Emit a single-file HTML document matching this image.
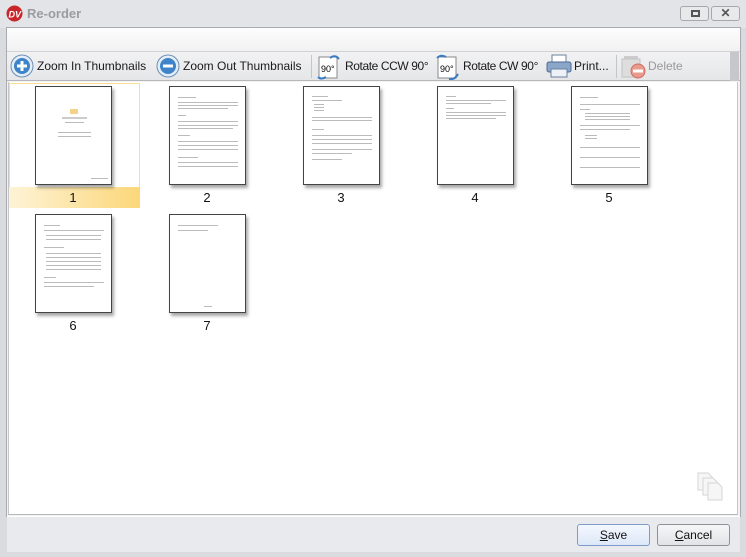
<!DOCTYPE html>
<html><head><meta charset="utf-8"><style>
*{margin:0;padding:0;box-sizing:border-box}
body{width:746px;height:557px;background:#d9dbdf;font-family:"Liberation Sans",sans-serif;position:relative;overflow:hidden}
.a{position:absolute}
.tb{font-size:12px;color:#1a1a1a;top:59px;white-space:nowrap}
.pg{position:absolute;width:77px;height:99px;background:#fff;border:1px solid #444;box-shadow:2px 3px 3px rgba(0,0,0,.35)}
.pg i{position:absolute;height:1px;background:#bbb;display:block}
.lbl{position:absolute;font-size:13px;color:#111;width:40px;text-align:center}
.btn{position:absolute;top:524px;width:73px;height:22px;border:1px solid #8e9298;border-radius:3px;font-size:12px;text-align:center;line-height:20px;color:#111}
</style></head><body>
<div class="a" style="left:0;top:0;width:746px;height:28px;background:#e3e4e7"></div>
<svg class="a" style="left:6px;top:5px" width="17" height="17"><circle cx="8.5" cy="8.5" r="8" fill="#c8262b"/><text x="2.5" y="12.5" font-size="9" font-weight="bold" fill="#fff" font-family="Liberation Sans" font-style="italic">DV</text></svg>
<div class="a" style="left:27px;top:6px;font-size:13px;font-weight:bold;color:#9a9ca0">Re-order</div>
<div class="a" style="left:680px;top:6px;width:29px;height:15px;border:1px solid #a6a8ad;border-radius:3px;background:#e8e9eb"><div class="a" style="left:10px;top:3px;width:9px;height:7px;border:2px solid #555"></div></div>
<div class="a" style="left:711px;top:6px;width:29px;height:15px;border:1px solid #a6a8ad;border-radius:3px;background:#e8e9eb;font-size:12px;font-weight:bold;color:#555;text-align:center;line-height:13px">✕</div>
<div class="a" style="left:6px;top:27px;width:735px;height:490px;border:1px solid #a9abb0;background:#f3f3f4"></div>
<div class="a" style="left:7px;top:28px;width:733px;height:24px;background:linear-gradient(#fdfdfd,#f1f1f2)"></div>
<div class="a" style="left:7px;top:51px;width:733px;height:30px;background:linear-gradient(#f2f2f3,#e5e6e8);border-top:1px solid #d0d1d4;border-bottom:1px solid #b5b7bb"></div>
<svg class="a" style="left:10px;top:54px" width="24" height="24"><circle cx="12" cy="12" r="11" fill="#e4eef8" stroke="#6c8fb5"/><circle cx="12" cy="12" r="8" fill="#3f83c8"/><rect x="7" y="10.5" width="10" height="3" fill="#fff"/><rect x="10.5" y="7" width="3" height="10" fill="#fff"/></svg>
<div class="a tb" style="left:37px">Zoom In Thumbnails</div>
<svg class="a" style="left:156px;top:54px" width="24" height="24"><circle cx="12" cy="12" r="11" fill="#e4eef8" stroke="#6c8fb5"/><circle cx="12" cy="12" r="8" fill="#3f83c8"/><rect x="7" y="10.5" width="10" height="3" fill="#fff"/></svg>
<div class="a tb" style="left:183px">Zoom Out Thumbnails</div>
<div class="a" style="left:311px;top:55px;width:1px;height:23px;background:#c4c5c8"></div>
<svg class="a" style="left:316px;top:53px" width="26" height="27"><rect x="3" y="4" width="18" height="21" fill="#fff" stroke="#888"/><text x="5" y="19" font-size="9" font-family="Liberation Sans">90°</text><path d="M14 5 Q19 1 23 6" stroke="#3a7cc4" stroke-width="2" fill="none"/><path d="M2 24 Q5 27 10 24" stroke="#3a7cc4" stroke-width="2" fill="none"/></svg>
<div class="a tb" style="left:345px;letter-spacing:-0.4px">Rotate CCW 90°</div>
<svg class="a" style="left:435px;top:53px" width="26" height="27"><rect x="3" y="4" width="18" height="21" fill="#fff" stroke="#888"/><text x="5" y="19" font-size="9" font-family="Liberation Sans">90°</text><path d="M2 5 Q6 1 11 4" stroke="#3a7cc4" stroke-width="2" fill="none"/><path d="M14 26 Q20 27 23 21" stroke="#3a7cc4" stroke-width="2" fill="none"/></svg>
<div class="a tb" style="left:463px;letter-spacing:-0.4px">Rotate CW 90°</div>
<svg class="a" style="left:546px;top:54px" width="26" height="24"><rect x="6" y="1" width="14" height="8" fill="#fff" stroke="#6a7fa0"/><rect x="1" y="8" width="24" height="10" rx="2" fill="#8aa6c8" stroke="#4d6a94"/><rect x="5" y="15" width="16" height="8" fill="#eef2f7" stroke="#6a7fa0"/></svg>
<div class="a tb" style="left:574px">Print...</div>
<div class="a" style="left:616px;top:55px;width:1px;height:23px;background:#c4c5c8"></div>
<svg class="a" style="left:620px;top:54px" width="28" height="26"><rect x="4" y="2" width="14" height="3" fill="#ccc"/><rect x="2" y="5" width="18" height="18" fill="#ddd" stroke="#c2c2c2"/><circle cx="18" cy="17" r="7" fill="#e89a8e" stroke="#d06c5e"/><rect x="13" y="15.5" width="10" height="3" fill="#fff"/></svg>
<div class="a tb" style="left:648px;color:#999">Delete</div>
<div class="a" style="left:730px;top:52px;width:9px;height:29px;background:#c6c7ca"></div>
<div class="a" style="left:8px;top:82px;width:730px;height:433px;background:#fff;border-left:1px solid #c4c6ca;border-right:1px solid #c4c6ca;border-bottom:1px solid #b5b7bb"></div>
<div class="a" style="left:9px;top:83px;width:131px;height:125px;border:1px solid #f8dd96;background:#fff"></div>
<div class="a" style="left:9px;top:187px;width:131px;height:21px;background:linear-gradient(90deg,#fdf3d6,#fcd77a)"></div>

<div class="pg" style="left:35px;top:86px"><i style="left:34px;top:22px;width:8px;height:5px;background:#f3d38a"></i><i style="left:26px;top:30px;width:25px;height:2px;background:#ccc"></i><i style="left:29px;top:35px;width:19px"></i><i style="left:22px;top:45px;width:33px"></i><i style="left:22px;top:49px;width:33px"></i><i style="left:55px;top:91px;width:17px"></i></div>
<div class="pg" style="left:169px;top:86px"><i style="left:8px;top:10px;width:18px"></i><i style="left:8px;top:15px;width:60px"></i><i style="left:8px;top:18px;width:60px"></i><i style="left:8px;top:21px;width:50px"></i><i style="left:8px;top:28px;width:8px"></i><i style="left:8px;top:34px;width:60px"></i><i style="left:8px;top:38px;width:60px"></i><i style="left:8px;top:41px;width:55px"></i><i style="left:8px;top:48px;width:12px"></i><i style="left:8px;top:54px;width:60px"></i><i style="left:8px;top:58px;width:60px"></i><i style="left:8px;top:62px;width:60px"></i><i style="left:8px;top:70px;width:20px"></i><i style="left:8px;top:75px;width:60px"></i><i style="left:8px;top:79px;width:60px"></i></div>
<div class="pg" style="left:303px;top:86px"><i style="left:8px;top:9px;width:16px"></i><i style="left:8px;top:13px;width:30px"></i><i style="left:10px;top:17px;width:10px"></i><i style="left:10px;top:20px;width:10px"></i><i style="left:10px;top:23px;width:10px"></i><i style="left:8px;top:30px;width:60px"></i><i style="left:8px;top:33px;width:60px"></i><i style="left:8px;top:42px;width:12px"></i><i style="left:8px;top:48px;width:60px"></i><i style="left:8px;top:52px;width:60px"></i><i style="left:8px;top:56px;width:60px"></i><i style="left:8px;top:62px;width:60px"></i><i style="left:8px;top:66px;width:40px"></i><i style="left:8px;top:72px;width:30px"></i></div>
<div class="pg" style="left:437px;top:86px"><i style="left:8px;top:9px;width:10px"></i><i style="left:8px;top:13px;width:60px"></i><i style="left:8px;top:16px;width:45px"></i><i style="left:8px;top:21px;width:8px"></i><i style="left:8px;top:25px;width:60px"></i><i style="left:8px;top:28px;width:60px"></i><i style="left:8px;top:31px;width:50px"></i></div>
<div class="pg" style="left:571px;top:86px"><i style="left:8px;top:10px;width:18px"></i><i style="left:8px;top:17px;width:60px"></i><i style="left:8px;top:22px;width:10px"></i><i style="left:13px;top:26px;width:45px"></i><i style="left:13px;top:29px;width:45px"></i><i style="left:13px;top:32px;width:45px"></i><i style="left:8px;top:38px;width:60px"></i><i style="left:8px;top:42px;width:50px"></i><i style="left:13px;top:48px;width:12px"></i><i style="left:13px;top:51px;width:12px"></i><i style="left:8px;top:60px;width:60px"></i><i style="left:8px;top:70px;width:60px"></i><i style="left:8px;top:80px;width:60px"></i></div>
<div class="pg" style="left:35px;top:214px"><i style="left:8px;top:10px;width:16px"></i><i style="left:8px;top:15px;width:60px"></i><i style="left:10px;top:20px;width:55px"></i><i style="left:10px;top:24px;width:55px"></i><i style="left:8px;top:32px;width:20px"></i><i style="left:10px;top:38px;width:55px"></i><i style="left:10px;top:42px;width:55px"></i><i style="left:10px;top:46px;width:55px"></i><i style="left:10px;top:50px;width:55px"></i><i style="left:10px;top:54px;width:55px"></i><i style="left:8px;top:62px;width:12px"></i><i style="left:8px;top:67px;width:60px"></i><i style="left:8px;top:71px;width:50px"></i></div>
<div class="pg" style="left:169px;top:214px"><i style="left:8px;top:10px;width:40px"></i><i style="left:8px;top:15px;width:30px"></i><i style="left:34px;top:91px;width:8px"></i></div>

<div class="lbl" style="left:53px;top:190px">1</div>
<div class="lbl" style="left:187px;top:190px">2</div>
<div class="lbl" style="left:321px;top:190px">3</div>
<div class="lbl" style="left:455px;top:190px">4</div>
<div class="lbl" style="left:589px;top:190px">5</div>
<div class="lbl" style="left:53px;top:318px">6</div>
<div class="lbl" style="left:187px;top:318px">7</div>

<svg class="a" style="left:697px;top:472px" width="34" height="32"><g fill="#f6f6f6" stroke="#d6d6d6"><path d="M1 1h10l4 4v13H1z"/><path d="M6 6h10l4 4v13H6z"/><path d="M11 11h10l4 4v13H11z"/></g></svg>

<div class="a" style="left:7px;top:516px;width:733px;height:36px;background:#e9eaee;border-top:1px solid #fff"></div>
<div class="btn" style="left:577px;background:linear-gradient(#f4f8ff,#dde7f7);border-color:#7d9ccb"><u>S</u>ave</div>
<div class="btn" style="left:657px;background:linear-gradient(#f6f6f7,#e2e3e6)"><u>C</u>ancel</div>
</body></html>
